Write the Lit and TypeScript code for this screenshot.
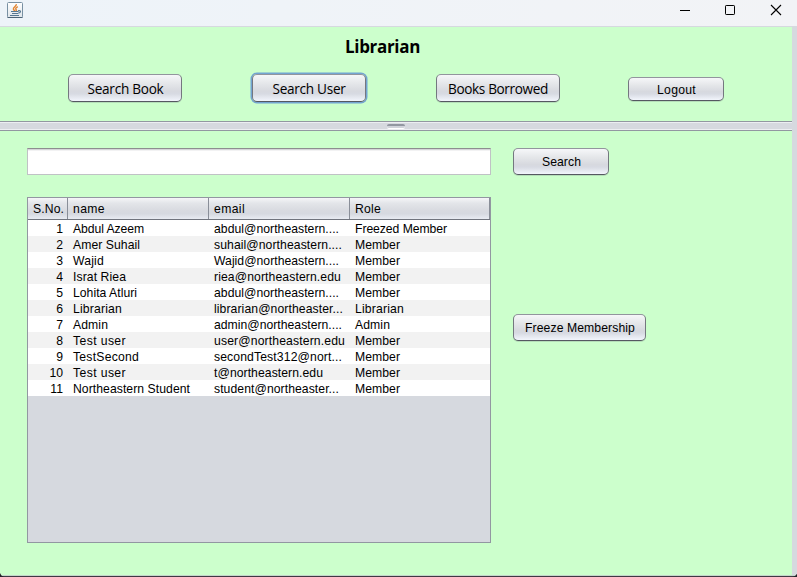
import { LitElement, html, css } from "lit";
import { customElement } from "lit/decorators.js";

type Cell = [string, number];

const rows: [Cell, Cell, Cell][] = [
  [["Abdul Azeem", 71], ["abdul@northeastern....", 125], ["Freezed Member", 92]],
  [["Amer Suhail", 67], ["suhail@northeastern....", 128], ["Member", 45]],
  [["Wajid", 31], ["Wajid@northeastern....", 125], ["Member", 45]],
  [["Israt Riea", 53], ["riea@northeastern.edu", 127], ["Member", 45]],
  [["Lohita Atluri", 64], ["abdul@northeastern....", 125], ["Member", 45]],
  [["Librarian", 49], ["librarian@northeaster...", 129], ["Librarian", 49]],
  [["Admin", 35], ["admin@northeastern....", 128], ["Admin", 35]],
  [["Test user", 53], ["user@northeastern.edu", 131], ["Member", 45]],
  [["TestSecond", 66], ["secondTest312@nort...", 128], ["Member", 45]],
  [["Test user", 53], ["t@northeastern.edu", 109], ["Member", 45]],
  [["Northeastern Student", 117], ["student@northeaster...", 125], ["Member", 45]],
];

/* Text whose tracking is adjusted so that it spans a given advance width. */
const fit = (text: string, width: number) => html`<span class="fit" data-w=${width}>${text}</span>`;

@customElement("app-root")
export class AppRoot extends LitElement {
  static styles = css`
    :host { display: flex; flex-direction: column; width: 797px; height: 577px; overflow: hidden; box-sizing: border-box; background: #cfc; color: #000; font: 12.2px/16px "Liberation Sans", Arial, sans-serif; position: relative; }
    * { box-sizing: border-box; }
    .fit { display: inline-block; white-space: pre; }
    .titlebar { flex: none; height: 27px; display: flex; background: linear-gradient(90deg, #edf3f9, #f1f3f7 70%, #f2f3f6); border-bottom: 1px solid #d6d9df; }
    .java { margin: 2px 0 0 7px; width: 16px; height: 16px; flex: none; }
    .controls { margin-left: auto; width: 117px; height: 26px; flex: none; }
    .body { flex: 1; display: flex; min-height: 0; }
    .content { width: 792px; display: flex; flex-direction: column; }
    .edge { flex: 1; background: #d6d9df; }
    .top { height: 94px; flex: none; }
    h1 { margin: 0; padding: 7px 0 0 345px; font: bold 17px/26px "Open Sans", "Noto Sans", sans-serif; }
    .nav { display: flex; padding: 14px 0 0 68px; align-items: flex-start; }
    button { flex: none; padding: 0 0 0 1px; color: #000; font: 12.2px/16px "Liberation Sans", Arial, sans-serif; border: 1px solid #8f929a; border-color: #92959d #74777f #555861 #74777f; border-radius: 5px; background: linear-gradient(#f6f7f9 0, #e5e7ea 32%, #d7d9df 62%, #d7dae2 72%, #f2f5fc 100%); box-shadow: 0 1px 0 #b5deb9; display: flex; align-items: center; justify-content: center; }
    .big { font: 13.6px/20px "Open Sans", "Noto Sans", sans-serif; height: 28px; padding-top: 2px; }
    .book { width: 114px; }
    .user { width: 114px; margin-left: 70px; padding-left: 0; box-shadow: 0 0 0 1.5px #73a4d1; }
    .borrowed { width: 124px; margin-left: 70px; padding-left: 0; }
    .logout { width: 96px; height: 24px; margin: 3px 0 0 68px; padding-top: 1px; }
    .divider { height: 10px; flex: none; background: #d6d9df; border-top: 1px solid #9297a1; border-bottom: 1px solid #9297a1; box-shadow: inset 0 1px #eceef2, inset 0 -1px #eceef2; display: flex; justify-content: center; }
    .grip { width: 18px; height: 5px; margin-top: 2px; border-top: 2px solid #9297a1; border-bottom: 1px solid #fff; background: #d0d3da; border-radius: 2px; }
    .bottom { flex: 1; display: flex; padding: 17px 0 0 27px; gap: 22px; align-items: flex-start; }
    .left { width: 464px; }
    .field { display: block; height: 27px; background: #fff; border: 1px solid #c0c2c5; border-top-color: #8d8e8f; box-shadow: inset 0 1px #d5d6d8, inset 0 2px #f2f2f3; }
    .table { height: 346px; margin-top: 22px; border: 1px solid #9297a1; background: #d6d9df; }
    .row { display: grid; grid-template-columns: 40px 141px 141px 140px; height: 16px; background: #fff; line-height: 18px; }
    .row:nth-child(odd) { background: #f2f2f2; }
    .row > div { padding-left: 5px; white-space: nowrap; height: 100%; min-height: 0; }
    .row > .num { padding: 0 5px 0 0; text-align: right; }
    .row.head { height: 22px; line-height: 22px; background: linear-gradient(#f5f6f8 0, #e3e5e9 25%, #d8dae0 60%, #d6d9e0 75%, #e8ebf2 100%); border-bottom: 1px solid #70747d; }
    .head > div { border-right: 1px solid #898e98; }
    .side { display: flex; flex-direction: column; }
    .search { width: 96px; height: 27px; }
    .freeze { width: 133px; height: 27px; margin-top: 139px; }
    .foot { height: 2px; flex: none; background: #3f3943; border-top: 1px solid #c3d5ca; }
    .corner { position: absolute; bottom: 0; width: 4px; height: 4px; background: #252329; }
    .bl { left: 0; clip-path: polygon(0 0, 0 100%, 100% 100%, 35% 65%); }
    .br { right: 0; clip-path: polygon(100% 20%, 100% 100%, 0 100%, 65% 65%); }
  `;

  protected updated() {
    this.renderRoot.querySelectorAll<HTMLElement>(".fit").forEach((el) => {
      el.style.letterSpacing = "0px";
      const extra = Number(el.dataset.w) - el.getBoundingClientRect().width;
      el.style.letterSpacing = `${extra / el.textContent!.length}px`;
    });
  }

  render() {
    return html`
      <div class="titlebar">
        <svg class="java" viewBox="0 0 16 16">
          <defs><linearGradient id="g" x2="0" y2="1"><stop stop-color="#fff" /><stop offset="1" stop-color="#dfe5ea" /></linearGradient></defs>
          <rect x=".5" y=".5" width="15" height="15" rx="1" fill="url(#g)" stroke="#7890a3" />
          <path d="M.5 15.5h15" stroke="#4c6376" />
          <path d="M9.3 2.2C9.8 4.3 6 5.3 6.4 7.2c.1.7 1 1.2 1.4 1.9M10.8 4.7C9 5.7 8 6.6 9.2 7.8c.4.5 0 1-.4 1.3" fill="none" stroke="#e28532" stroke-width="1.4" />
          <path d="M4 9.5h7.5M5 11.5h6M3 13.5h9M11 8.8c3.4-.8 3.2 2 .2 2.4" fill="none" stroke="#567791" stroke-width="1.2" />
        </svg>
        <svg class="controls" viewBox="0 0 117 26" fill="none" stroke="#000">
          <path d="M0 10.5h10" />
          <rect x="45.5" y="5.5" width="9" height="9" rx=".7" />
          <path d="M91 5l10 10M101 5L91 15" stroke-width="1.1" />
        </svg>
      </div>
      <div class="body">
        <div class="content">
          <div class="top">
            <h1>${fit("Librarian", 75)}</h1>
            <div class="nav">
              <button class="big book">${fit("Search Book", 76)}</button>
              <button class="big user">${fit("Search User", 73)}</button>
              <button class="big borrowed">${fit("Books Borrowed", 100)}</button>
              <button class="logout">${fit("Logout", 39)}</button>
            </div>
          </div>
          <div class="divider"><div class="grip"></div></div>
          <div class="bottom">
            <div class="left">
              <div class="field"></div>
              <div class="table">
                <div class="row head">
                  <div>${fit("S.No.", 31)}</div><div>${fit("name", 32)}</div><div>${fit("email", 31)}</div><div>${fit("Role", 26)}</div>
                </div>
                ${rows.map((r, i) => html`<div class="row">
                  <div class="num">${i + 1}</div>${r.map(([t, w]) => html`<div>${fit(t, w)}</div>`)}
                </div>`)}
              </div>
            </div>
            <div class="side">
              <button class="search">${fit("Search", 39)}</button>
              <button class="freeze">${fit("Freeze Membership", 110)}</button>
            </div>
          </div>
        </div>
        <div class="edge"></div>
      </div>
      <div class="foot"></div>
      <div class="corner bl"></div><div class="corner br"></div>
    `;
  }
}
